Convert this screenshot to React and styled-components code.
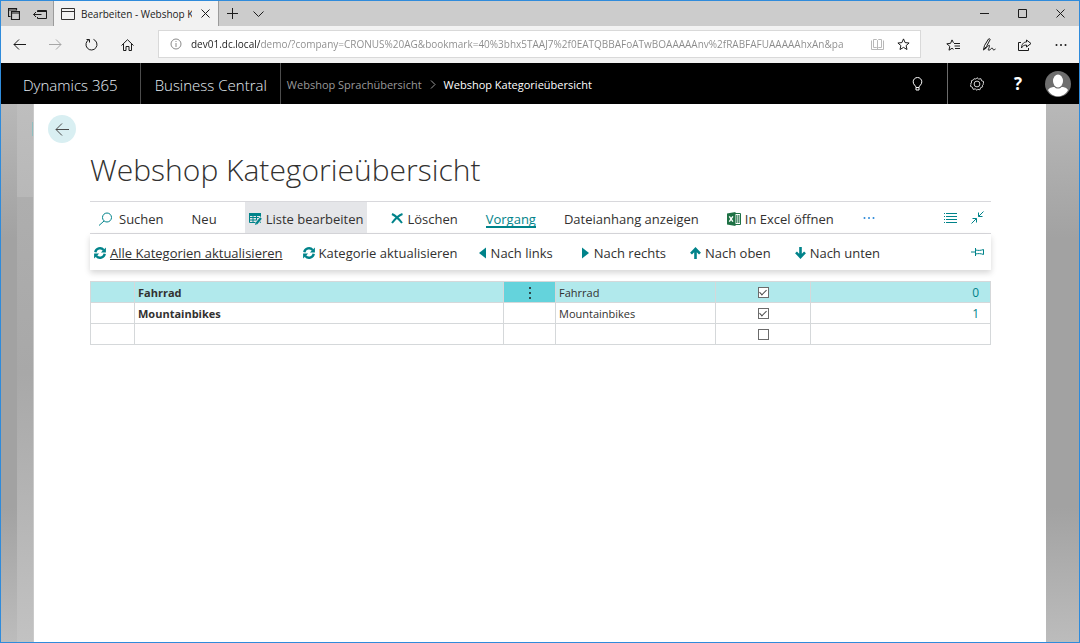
import React, { useState } from "react";
import styled, { createGlobalStyle } from "styled-components";

const GlobalStyle = createGlobalStyle`
  * {
    box-sizing: border-box;
  }
  body {
    margin: 0;
    background: #ffffff;
    font-family: "Open Sans", "Noto Sans", sans-serif;
    font-size: 12px;
    color: #323130;
  }
  button, input {
    font: inherit;
    color: inherit;
  }
`;

const BrowserWindow = styled.div`
  display: flex;
  flex-direction: column;
  min-height: 100vh;
  border: 1px solid #2f8bdb;
`;

/* browser chrome */

const TabStrip = styled.div`
  display: flex;
  height: 25px;
  background: #cccccc;
`;

const IconButton = styled.button`
  display: flex;
  align-items: center;
  justify-content: center;
  flex: none;
  width: ${(props) => props.$width}px;
  padding: 0;
  border: none;
  background: transparent;
  color: ${(props) => props.$color || "#1b1b1b"};
  cursor: pointer;
`;

const Tab = styled.div`
  display: flex;
  align-items: center;
  width: 166px;
  padding-left: 7px;
  background: #f2f2f2;
  border-left: 1px solid #9b9b9b;
  border-right: 1px solid #9b9b9b;
`;

const TabTitle = styled.span`
  flex: 1;
  min-width: 0;
  margin-left: 6px;
  overflow: hidden;
  white-space: nowrap;
  font-size: 10px;
  color: #1b1b1b;
`;

const Spacer = styled.div`
  flex: 1;
`;

const NavBar = styled.div`
  display: flex;
  height: 37px;
  background: #f2f2f2;
`;

const AddressBar = styled.div`
  display: flex;
  flex: 1;
  align-items: center;
  min-width: 0;
  height: 28px;
  margin: 4px 14px 4px 12px;
  padding: 0 4px 0 11px;
  border: 1px solid #d9d9d9;
  background: #ffffff;
`;

const AddressInput = styled.input`
  flex: 1;
  min-width: 0;
  height: 24px;
  margin: 0 2px 0 9px;
  padding: 0;
  border: none;
  outline: none;
  font-size: 10px;
  color: transparent;
  caret-color: #1b1b1b;
  background: linear-gradient(to right, #1b1b1b 69px, #8a8a8a 69px);
  background-clip: text;
`;

/* product header */

const Header = styled.header`
  display: flex;
  height: 41px;
  padding-right: 7px;
  background: #000000;
  color: #ffffff;
`;

const Brand = styled.a`
  display: flex;
  align-items: center;
  padding: 2px ${(props) => props.$right}px 0 ${(props) => props.$left}px;
  border-right: 1px solid #4d4d4d;
  color: #e6eef5;
  font-size: 15px;
  font-weight: 300;
  text-decoration: none;
  white-space: nowrap;
`;

const Breadcrumb = styled.nav`
  display: flex;
  align-items: center;
  gap: 8px;
  padding: 2px 0 0 6px;
  font-size: 11px;
  color: #9a9a9a;
  white-space: nowrap;

  a {
    color: inherit;
    text-decoration: none;
  }
  strong {
    font-weight: 400;
    color: #ffffff;
  }
`;

const HeaderDivider = styled.div`
  width: 1px;
  background: #6b6b6b;
`;

const Help = styled.span`
  font-size: 17px;
  font-weight: 700;
`;

const AccountButton = styled(IconButton)`
  margin-left: 14px;
`;

/* page */

const Backdrop = styled.div`
  display: flex;
  flex: 1;
  padding-right: 33px;
  background: linear-gradient(#b8b8b8, #a2a2a2 25%, #a2a2a2 75%, #bcbcbc);
`;

const BackPage = styled.div`
  display: flex;
  flex: none;
  justify-content: flex-end;
  width: 17px;
  margin-left: 16px;
  border-right: 1px solid #cacaca;
  background: linear-gradient(#bebebe 0, #b8b8b8 93px, #aeaeae 93px, #a8a8a8 50%, #c2c2c2);
`;

const BackPageButton = styled.div`
  width: 1px;
  height: 14px;
  margin-top: 18px;
  background: #8fbdbf;
`;

const Page = styled.main`
  flex: 1;
  min-width: 0;
  padding: 11px 55px 40px 56px;
  background: #ffffff;
`;

const BackButton = styled.button`
  display: flex;
  align-items: center;
  justify-content: center;
  width: 28px;
  height: 28px;
  margin-left: -42px;
  padding: 0;
  border: none;
  border-radius: 50%;
  background: #d9eff2;
  color: #4a4a4a;
  cursor: pointer;
`;

const Title = styled.h1`
  margin: 6px 0 10px;
  font-size: 30px;
  line-height: 42px;
  font-weight: 300;
  color: #323130;
`;

const ActionBar = styled.div`
  display: flex;
  align-items: stretch;
  height: 33px;
  border-top: 1px solid #d8d8dc;
  border-bottom: 1px solid #d8d8dc;
`;

const SubBar = styled.div`
  display: flex;
  align-items: center;
  height: 36px;
  margin-bottom: 11px;
  box-shadow: 0 3px 6px rgba(0, 0, 0, 0.16);
`;

const Action = styled.button`
  display: flex;
  align-items: center;
  gap: ${(props) => props.$gap || 4}px;
  flex: none;
  margin-right: ${(props) => props.$space || 20}px;
  padding: 2px 4px 0;
  border: none;
  background: ${(props) => (props.$active ? "#e5e6e9" : "transparent")};
  font-size: 13px;
  line-height: 16px;
  white-space: nowrap;
  cursor: pointer;

  svg {
    flex: none;
    color: #00838a;
  }
  span {
    text-decoration: ${(props) => (props.$underlined ? "underline" : "none")};
  }
`;

const TabAction = styled(Action)`
  color: #00838a;

  span {
    box-shadow: 0 1px 0 #00838a, inset 0 -1px 0 #00838a;
  }
`;

const Table = styled.table`
  width: 100%;
  table-layout: fixed;
  border-collapse: collapse;
`;

const Col = styled.col`
  width: ${(props) => props.$width};
`;

const Row = styled.tr`
  height: 21px;
  background: ${(props) => (props.$selected ? "#b1e9ec" : "#ffffff")};
`;

const Cell = styled.td`
  height: 21px;
  padding: 1px ${(props) => (props.$align === "right" ? 11 : 3)}px 0 3px;
  border: 1px solid #d5d8da;
  background: ${(props) => (props.$menu ? "#64d3dc" : "transparent")};
  font-weight: ${(props) => (props.$bold ? 700 : 400)};
  font-size: 11px;
  line-height: 16px;
  text-align: ${(props) => props.$align || "left"};
  vertical-align: middle;

  a {
    color: #00838a;
    font-size: 12px;
    text-decoration: none;
  }
  button {
    width: 100%;
    height: 16px;
  }
`;

const Checkbox = styled.input`
  display: grid;
  place-items: center;
  appearance: none;
  width: 11px;
  height: 11px;
  margin: 0 auto;
  border: 1px solid #6b6b6b;
  background: #ffffff;

  &:checked::after {
    content: "";
    width: 3px;
    height: 6px;
    margin-bottom: 2px;
    border: solid #4a4a4a;
    border-width: 0 1px 1px 0;
    transform: rotate(45deg);
  }
`;

const Svg = ({ w = 12, h = w, box, sw = 1, children }) => (
  <svg
    width={w}
    height={h}
    viewBox={box || `0 0 ${w} ${h}`}
    fill="none"
    stroke="currentColor"
    strokeWidth={sw}
    aria-hidden="true"
  >
    {children}
  </svg>
);

const RefreshIcon = () => (
  <Svg w={12} sw={2.4}>
    <path d="M1.3 5.2A4.7 4.7 0 0 1 9.6 3M10.7 6.8A4.7 4.7 0 0 1 2.4 9" />
    <path d="M11.9 .4v5H6.900zM.1 11.600v-5h5z" fill="currentColor" stroke="none" />
  </Svg>
);

const TriangleIcon = ({ right }) => (
  <Svg w={9} h={12}>
    <path d={right ? "M1 .500v11l7-5.500z" : "M8 .500v11L1 6z"} fill="currentColor" stroke="none" />
  </Svg>
);

const ArrowIcon = ({ down }) => (
  <Svg w={11} h={12} sw={2.6}>
    {down ? <path d="M5.500 0v10M1 5.300l4.500 4.700 4.500-4.700" /> : <path d="M5.500 12V2M1 6.700l4.500-4.700 4.500 4.700" />}
  </Svg>
);

const EditListIcon = () => (
  <Svg w={13} h={12}>
    <path d="M.5 .5h11v9H.5zM.5 4.500h11M.5 7h8M4 2v7.500M7.500 2v7" />
    <path d="M0 0h12v3H0z" fill="currentColor" stroke="none" />
    <path d="M12.500 4.500l-5 6" stroke="#e5e6e9" strokeWidth="4" />
    <path d="M12 5l-4.500 5.500" strokeWidth="2.200" />
    <path d="M6 12l.6-2.500 1.800 1.500z" fill="currentColor" stroke="none" />
  </Svg>
);

const ExcelIcon = () => (
  <Svg w={14} h={14}>
    <path d="M8 1.500h5.500v11H8" stroke="#1e7145" fill="#ffffff" />
    <path d="M9 4h1.500M11 4h1.500M9 6h1.500M11 6h1.500M9 8h1.500M11 8h1.500M9 10h1.500M11 10h1.500" stroke="#1e7145" strokeWidth="1.300" />
    <path d="M0 1.500L8.500 0v14L0 12.500z" fill="#1e7145" stroke="none" />
    <path d="M2.300 4.300l3.600 5.400M5.900 4.300L2.300 9.700" stroke="#ffffff" strokeWidth="1.400" />
  </Svg>
);

const EllipsisIcon = () => (
  <Svg w={14} h={4}>
    <g fill="currentColor" stroke="none">
      <circle cx="2.500" cy="2" r="1" />
      <circle cx="7" cy="2" r="1" />
      <circle cx="11.500" cy="2" r="1" />
    </g>
  </Svg>
);

const rows = [
  { code: "Fahrrad", name: "Fahrrad", active: true, level: 0 },
  { code: "Mountainbikes", name: "Mountainbikes", active: true, level: 1 },
  { code: "", name: "", active: false, level: null },
];

function BrowserChrome() {
  const [url, setUrl] = useState(
    "dev01.dc.local/demo/?company=CRONUS%20AG&bookmark=40%3bhx5TAAJ7%2f0EATQBBAFoATwBOAAAAAnv%2fRABFAFUAAAAAhxAn&pa"
  );

  return (
    <>
      <TabStrip>
        <IconButton $width={26} aria-label="Tabs">
          <Svg w={12}>
            <path d="M2.500 8.500h-2v-8h8v2M.5 2h8M3.500 3.500h8v8h-8zM3.500 5h8" strokeWidth="1.200" />
          </Svg>
        </IconButton>
        <IconButton $width={26} aria-label="Tabs beiseitelegen">
          <Svg w={14} h={10}>
            <path d="M4.500 3V1.500h9v8h-9V8M4.500 2.500h9M8.500 5.500h-8M3 3L.6 5.500 3 8" />
          </Svg>
        </IconButton>
        <Tab>
          <Svg w={14} h={12}>
            <path d="M.5 .5h13v11H.5zM.5 3.500h13" />
          </Svg>
          <TabTitle>Bearbeiten - Webshop Kategorieübersicht</TabTitle>
          <IconButton $width={26} aria-label="Tab schließen">
            <Svg w={9}>
              <path d="M.5 .5l8 8M8.500 .5l-8 8" />
            </Svg>
          </IconButton>
        </Tab>
        <IconButton $width={27} aria-label="Neuer Tab">
          <Svg w={11}>
            <path d="M5.500 0v11M0 5.500h11" />
          </Svg>
        </IconButton>
        <IconButton $width={25} aria-label="Tabvorschau">
          <Svg w={11} h={6}>
            <path d="M.5 .5l5 5 5-5" />
          </Svg>
        </IconButton>
        <Spacer />
        <IconButton $width={38} aria-label="Minimieren">
          <Svg w={9}>
            <path d="M0 4.500h9" />
          </Svg>
        </IconButton>
        <IconButton $width={38} aria-label="Maximieren">
          <Svg w={9}>
            <path d="M.5 .5h8v8h-8z" />
          </Svg>
        </IconButton>
        <IconButton $width={38} aria-label="Schließen">
          <Svg w={9}>
            <path d="M.5 .5l8 8M8.500 .5l-8 8" />
          </Svg>
        </IconButton>
      </TabStrip>
      <NavBar>
        <IconButton $width={36} aria-label="Zurück">
          <Svg w={13} h={11}>
            <path d="M13 5.500H1M6 .5l-5 5 5 5" />
          </Svg>
        </IconButton>
        <IconButton $width={36} $color="#a6a6a6" aria-label="Vorwärts">
          <Svg w={13} h={11}>
            <path d="M0 5.500h12M7 .5l5 5-5 5" />
          </Svg>
        </IconButton>
        <IconButton $width={36} aria-label="Aktualisieren">
          <Svg w={13} h={13}>
            <path d="M4 1.600A5.500 5.500 0 1 0 8.500 1.400M1.500 1.500h3v3" />
          </Svg>
        </IconButton>
        <IconButton $width={37} aria-label="Startseite">
          <Svg w={13} h={12}>
            <path d="M.5 6.500l6-5.800 6 5.800M2.500 5v6.500h2.500v-4h3v4h2.500V5" />
          </Svg>
        </IconButton>
        <AddressBar>
          <Svg w={12}>
            <circle cx="6" cy="6" r="5" stroke="#8a8a8a" />
            <path d="M6 5v4M6 3v1" stroke="#8a8a8a" />
          </Svg>
          <AddressInput
            aria-label="Adresse"
            value={url}
            onChange={(e) => setUrl(e.target.value)}
          />
          <IconButton $width={26} $color="#b8b8b8" aria-label="Leseansicht">
            <Svg w={13} h={11}>
              <path d="M.5 1.500v9h5.500l.5.5.5-.5h5.500v-9M6.500 1.500V11M2.500.5h3l1 1 1-1h3v8h-3l-1 1-1-1h-3z" />
            </Svg>
          </IconButton>
          <IconButton $width={26} aria-label="Favorit">
            <Svg w={13} h={12}>
              <path d="M6.500 .9l1.600 3.700 4 .4-3 2.600.9 3.900-3.500-2.100L3 11.500l.9-3.900-3-2.600 4-.4z" />
            </Svg>
          </IconButton>
        </AddressBar>
        <IconButton $width={36} aria-label="Hub">
          <Svg w={14} h={12}>
            <path d="M8 4.500h6M8.500 7h5.500M9 9.500h5M7.500 3.800L6 .9 4.600 4.300.8 4.800l3 2.500L3 11.200l3-1.900 1.500 1" />
          </Svg>
        </IconButton>
        <IconButton $width={36} aria-label="Notizen">
          <Svg w={14} h={13}>
            <path d="M1.500 11.500l1-4L6.500 1c.6-.9 2 0 1.500.9L4.500 8.500zM1 12c3-.5 6-6 6.500-4.500S5 12.500 7 12.200s2-2.200 3-2.200.8 2 1.800 2 1-1 1.700-1" />
          </Svg>
        </IconButton>
        <IconButton $width={36} aria-label="Teilen">
          <Svg w={14} h={12}>
            <path d="M3 3.500H.5v8h10V9M8.500 1l4.500 3.500L8.500 8V6C6 6 4.500 7 3.500 9c0-3.500 2-6 5-6z" />
          </Svg>
        </IconButton>
        <IconButton $width={36} aria-label="Mehr">
          <EllipsisIcon />
        </IconButton>
      </NavBar>
    </>
  );
}

function ProductHeader() {
  return (
    <Header>
      <Brand href="#" $left={22} $right={22}>
        Dynamics 365
      </Brand>
      <Brand href="#" $left={14} $right={13}>
        Business Central
      </Brand>
      <Breadcrumb>
        <a href="#">Webshop Sprachübersicht</a>
        <Svg w={6} h={9}>
          <path d="M1 .5l4 4-4 4" />
        </Svg>
        <strong>Webshop Kategorieübersicht</strong>
      </Breadcrumb>
      <Spacer />
      <IconButton $width={59} $color="#ffffff" aria-label="Suche">
        <Svg w={11} h={14}>
          <path d="M4 10.500C4 8.500 1.200 8 1.200 4.800a4.300 4.300 0 0 1 8.600 0C9.800 8 7 8.500 7 10.500zM4 10.500v2.500h3v-2.500" />
        </Svg>
      </IconButton>
      <HeaderDivider />
      <IconButton $width={58} $color="#d6d6d6" aria-label="Einstellungen">
        <Svg w={14}>
          <circle cx="7" cy="7" r="2.900" />
          <path d="M7 .7l1.700 1.400 2.200-.4.700 2.100 2.100.7-.4 2.200L13.300 7l-.0.3-1.000 1.500.4 1.000-2.100.9-.7 2.100-2.200-.5L7 13.300l-1.700-1.400-2.200.4-.7-2.100-2-.9.600-2L.7 7l1-2-.4-1.200 2.100-.9.7-1.200 1.700.4z" />
        </Svg>
      </IconButton>
      <IconButton $width={24} $color="#ffffff" aria-label="Hilfe">
        <Help>?</Help>
      </IconButton>
      <AccountButton $width={28} $color="#ffffff" aria-label="Konto">
        <Svg w={26}>
          <circle cx="13" cy="13" r="13" fill="#6e6e6e" stroke="none" />
          <ellipse cx="13" cy="10" rx="5" ry="6.500" fill="#ffffff" stroke="none" />
          <path d="M3 19c2-3 5-3 6.500-3 1.500 2 5.500 2 7 0 2 0 4.500 0 6.500 3-2 4-6 6.300-10 6.300S5 23 3 19z" fill="#ffffff" stroke="none" />
        </Svg>
      </AccountButton>
    </Header>
  );
}

function CategoryRow({ row, selected }) {
  const [checked, setChecked] = useState(row.active);

  return (
    <Row $selected={selected}>
      <Cell />
      <Cell $bold>{row.code}</Cell>
      <Cell $menu={selected}>
        {selected && (
          <IconButton $width={16} aria-label="Weitere Optionen">
            <Svg w={4} h={14}>
              <path d="M2 1v2M2 6v2M2 11v2" strokeWidth="1.500" />
            </Svg>
          </IconButton>
        )}
      </Cell>
      <Cell>{row.name}</Cell>
      <Cell $align="center">
        <Checkbox
          type="checkbox"
          aria-label={`Aktiv ${row.name}`}
          checked={checked}
          onChange={(e) => setChecked(e.target.checked)}
        />
      </Cell>
      <Cell $align="right">{row.level !== null && <a href="#">{row.level}</a>}</Cell>
    </Row>
  );
}

function App() {
  return (
    <BrowserWindow>
      <GlobalStyle />
      <BrowserChrome />
      <ProductHeader />
      <Backdrop>
        <BackPage>
          <BackPageButton />
        </BackPage>
        <Page>
          <BackButton aria-label="Zurück">
            <Svg w={14} h={13}>
              <path d="M14 6.500H1M7 .5l-6 6 6 6" />
            </Svg>
          </BackButton>
          <Title>Webshop Kategorieübersicht</Title>
          <ActionBar>
            <Action $gap={7}>
              <Svg w={18} h={14}>
                <circle cx="13" cy="5.500" r="4.500" />
                <path d="M10 9l-5 4.500" />
              </Svg>
              <span>Suchen</span>
            </Action>
            <Action $space={24}>
              <span>Neu</span>
            </Action>
            <Action $active>
              <EditListIcon />
              <span>Liste bearbeiten</span>
            </Action>
            <Action>
              <Svg w={12} h={11} sw={2}>
                <path d="M1 1c3 1.500 7 5 10 9M11.500 1C7 2.500 4 6 1 10" />
              </Svg>
              <span>Löschen</span>
            </Action>
            <TabAction>
              <span>Vorgang</span>
            </TabAction>
            <Action>
              <span>Dateianhang anzeigen</span>
            </Action>
            <Action $space={24}>
              <ExcelIcon />
              <span>In Excel öffnen</span>
            </Action>
            <IconButton $width={14} $color="#2b88d8" aria-label="Mehr Optionen">
              <EllipsisIcon />
            </IconButton>
            <Spacer />
            <IconButton $width={26} $color="#00838a" aria-label="Liste">
              <Svg w={13} h={10}>
                <path d="M0 .5h1M2 .5h11M0 3.500h1M2 3.500h11M0 6.500h1M2 6.500h11M0 9.500h1M2 9.500h11" />
              </Svg>
            </IconButton>
            <IconButton $width={28} $color="#00838a" aria-label="Verkleinern">
              <Svg w={13}>
                <path d="M12.500 .5l-5 5M7.500 1.500v4h4M.5 12.500l5-5M1.500 7.500h4v4" />
              </Svg>
            </IconButton>
          </ActionBar>
          <SubBar>
            <Action $underlined $space={12}>
              <RefreshIcon />
              <span>Alle Kategorien aktualisieren</span>
            </Action>
            <Action $space={12}>
              <RefreshIcon />
              <span>Kategorie aktualisieren</span>
            </Action>
            <Action>
              <TriangleIcon />
              <span>Nach links</span>
            </Action>
            <Action $space={16}>
              <TriangleIcon right />
              <span>Nach rechts</span>
            </Action>
            <Action $space={16}>
              <ArrowIcon />
              <span>Nach oben</span>
            </Action>
            <Action>
              <ArrowIcon down />
              <span>Nach unten</span>
            </Action>
            <Spacer />
            <IconButton $width={28} $color="#00838a" aria-label="Anheften">
              <Svg w={13} h={8}>
                <path d="M0 4h4.500M4.500 0v8M4.500 2c3 .6 5 .6 8-.5v5c-3-1.100-5-1.100-8-.5" />
              </Svg>
            </IconButton>
          </SubBar>
          <Table>
            <colgroup>
              <Col $width="44px" />
              <Col $width="41%" />
              <Col $width="52px" />
              <Col />
              <Col $width="95px" />
              <Col $width="20%" />
            </colgroup>
            <tbody>
              {rows.map((row, i) => (
                <CategoryRow key={i} row={row} selected={i === 0} />
              ))}
            </tbody>
          </Table>
        </Page>
      </Backdrop>
    </BrowserWindow>
  );
}

export default App;
